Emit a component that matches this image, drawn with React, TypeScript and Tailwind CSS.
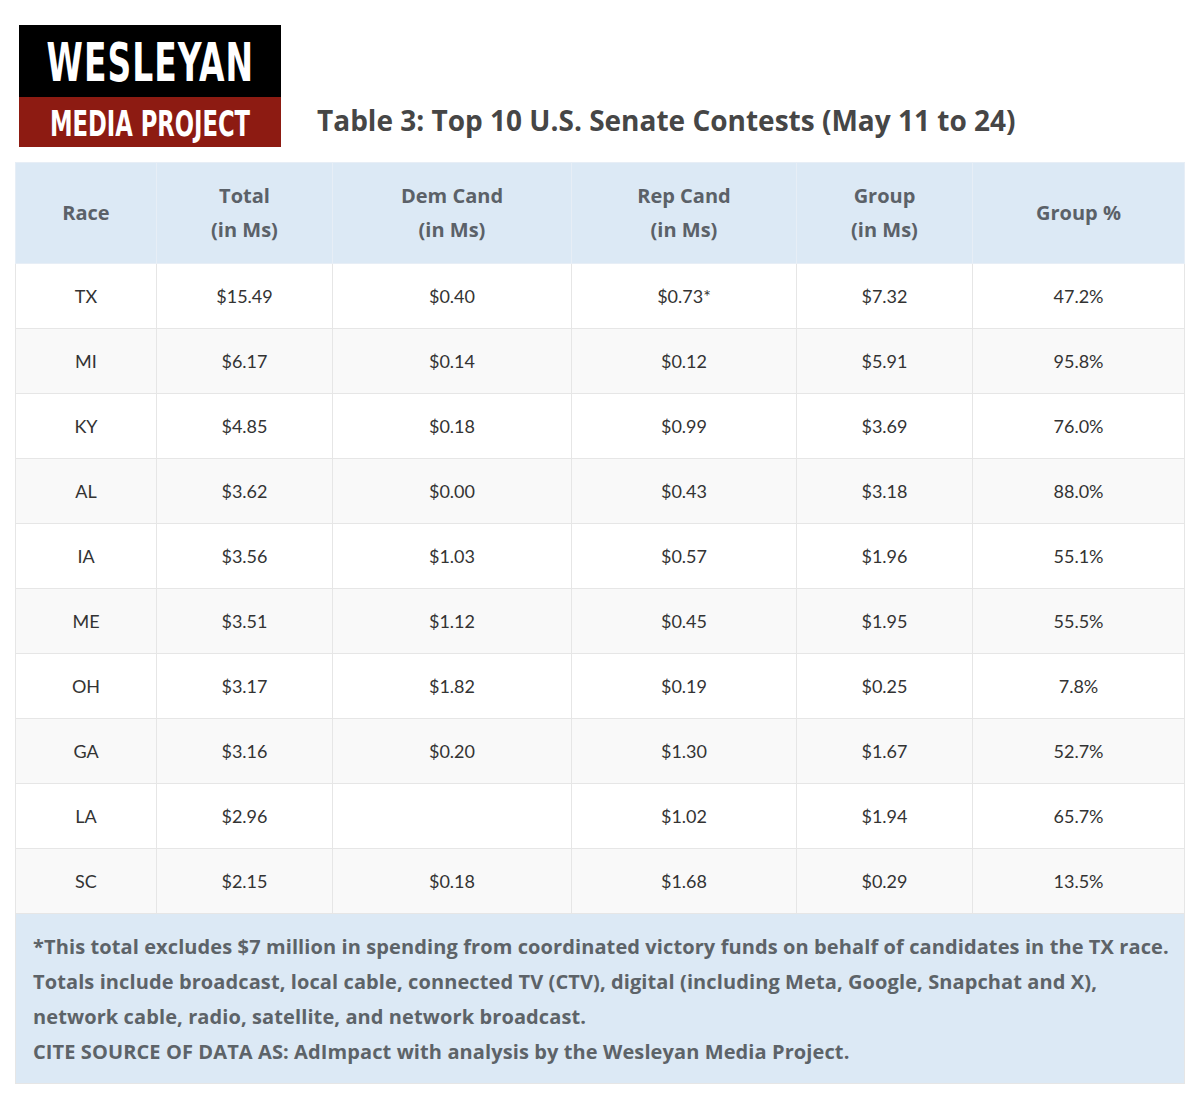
import React from "react";

type Row = {
  race: string;
  total: string;
  dem: string;
  rep: string;
  group: string;
  pct: string;
};

const rows: Row[] = [
  { race: "TX", total: "$15.49", dem: "$0.40", rep: "$0.73*", group: "$7.32", pct: "47.2%" },
  { race: "MI", total: "$6.17", dem: "$0.14", rep: "$0.12", group: "$5.91", pct: "95.8%" },
  { race: "KY", total: "$4.85", dem: "$0.18", rep: "$0.99", group: "$3.69", pct: "76.0%" },
  { race: "AL", total: "$3.62", dem: "$0.00", rep: "$0.43", group: "$3.18", pct: "88.0%" },
  { race: "IA", total: "$3.56", dem: "$1.03", rep: "$0.57", group: "$1.96", pct: "55.1%" },
  { race: "ME", total: "$3.51", dem: "$1.12", rep: "$0.45", group: "$1.95", pct: "55.5%" },
  { race: "OH", total: "$3.17", dem: "$1.82", rep: "$0.19", group: "$0.25", pct: "7.8%" },
  { race: "GA", total: "$3.16", dem: "$0.20", rep: "$1.30", group: "$1.67", pct: "52.7%" },
  { race: "LA", total: "$2.96", dem: "", rep: "$1.02", group: "$1.94", pct: "65.7%" },
  { race: "SC", total: "$2.15", dem: "$0.18", rep: "$1.68", group: "$0.29", pct: "13.5%" },
];

const headers: [string, string?][] = [
  ["Race"],
  ["Total", "(in Ms)"],
  ["Dem Cand", "(in Ms)"],
  ["Rep Cand", "(in Ms)"],
  ["Group", "(in Ms)"],
  ["Group %"],
];

const colWidths = ["w-[141px]", "w-[176px]", "w-[239px]", "w-[225px]", "w-[176px]", "w-[212px]"];

const Logo: React.FC = () => (
  <div className="w-[262px] h-[122px] flex flex-col shrink-0">
    <div className="h-[72px] bg-black flex items-center justify-center overflow-hidden">
      <span className="inline-block text-white font-['DejaVu_Sans_Condensed','DejaVu_Sans',sans-serif] font-bold text-[53px] leading-none scale-x-[0.69] tracking-[1.5px] pt-[3px]">
        WESLEYAN
      </span>
    </div>
    <div className="h-[50px] bg-[#8d1b12] flex items-center justify-center overflow-hidden">
      <span className="inline-block text-white font-['DejaVu_Sans_Condensed','DejaVu_Sans',sans-serif] font-bold text-[36px] leading-none scale-x-[0.7] whitespace-nowrap pt-[3px]">
        MEDIA PROJECT
      </span>
    </div>
  </div>
);

export default function App() {
  return (
    <div className="w-[1200px] h-[1102px] bg-white font-['Lato','Open_Sans',sans-serif] overflow-hidden">
      <div className="flex items-end pt-[25px] pl-[19px] gap-[36px]">
        <Logo />
        <h1 className="font-['Open_Sans','Lato',sans-serif] text-[28px] font-bold text-[#464646] leading-none pb-[13px] whitespace-nowrap">
          Table 3: Top 10 U.S. Senate Contests (May 11 to 24)
        </h1>
      </div>

      <table className="mt-[15px] ml-[15px] w-[1169px] table-fixed border-collapse">
        <colgroup>
          {colWidths.map((w, i) => (
            <col key={i} className={w} />
          ))}
        </colgroup>
        <thead>
          <tr className="h-[101px] bg-[#dce9f5]">
            {headers.map(([a, b], i) => (
              <th
                key={i}
                className="border border-[#e7eef6] font-['Open_Sans','Lato',sans-serif] text-[20px] font-bold text-[#5b6168] leading-[34px] text-center align-middle"
              >
                <div>{a}</div>
                {b && <div>{b}</div>}
              </th>
            ))}
          </tr>
        </thead>
        <tbody>
          {rows.map((r, i) => (
            <tr key={r.race} className={`h-[65px] ${i % 2 === 0 ? "bg-white" : "bg-[#f9f9f9]"}`}>
              {[r.race, r.total, r.dem, r.rep, r.group, r.pct].map((v, j) => (
                <td
                  key={j}
                  className="border border-[#e6e6e6] text-center align-middle text-[18px] text-[#333333]"
                >
                  {v}
                </td>
              ))}
            </tr>
          ))}
          <tr className="bg-[#dce9f5]">
            <td
              colSpan={6}
              className="border border-[#e6e6e6] pl-[17px] pr-[2px] pt-[15px] pb-[14px] font-['Open_Sans','Lato',sans-serif] text-[20px] font-bold text-[#5d6368] leading-[35px] tracking-[0.1px]"
            >
              <p className="whitespace-nowrap">
                *This total excludes $7 million in spending from coordinated victory funds on behalf of candidates in the TX race.
              </p>
              <p>
                Totals include broadcast, local cable, connected TV (CTV), digital (including Meta, Google, Snapchat and X),
                <br />
                network cable, radio, satellite, and network broadcast.
              </p>
              <p>CITE SOURCE OF DATA AS: AdImpact with analysis by the Wesleyan Media Project.</p>
            </td>
          </tr>
        </tbody>
      </table>
    </div>
  );
}
